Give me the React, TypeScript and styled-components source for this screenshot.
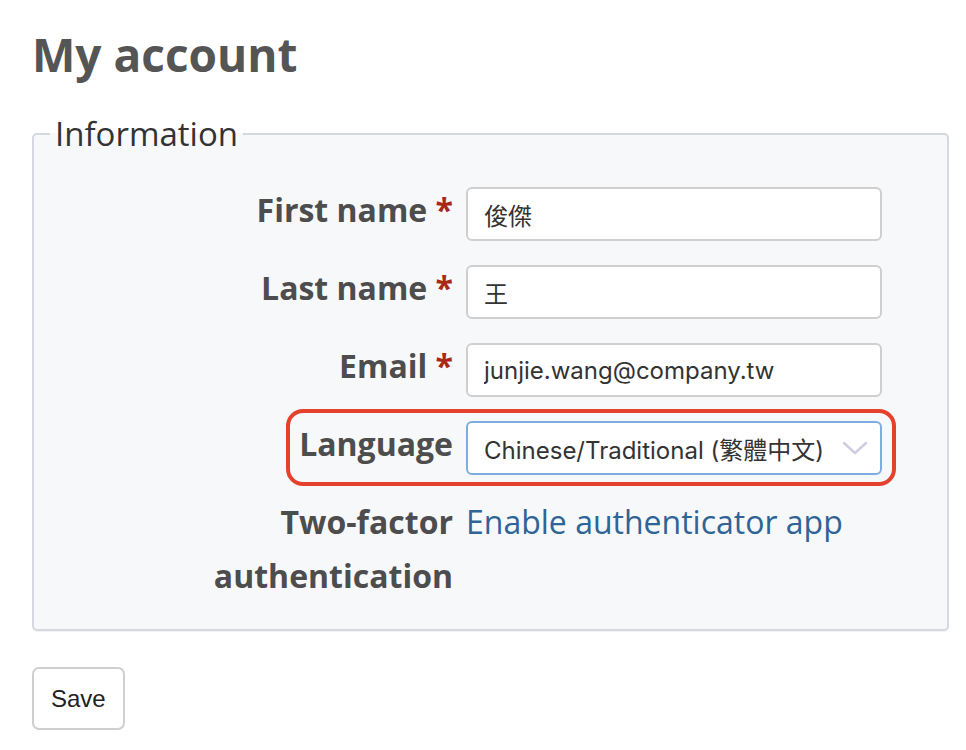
import React from 'react'
import styled, { createGlobalStyle } from 'styled-components'

const GlobalStyle = createGlobalStyle`
  html, body {
    margin: 0;
    padding: 0;
    background: #fff;
  }
  body {
    font-family: "Open Sans", "Noto Sans", "Noto Sans CJK TC", sans-serif;
    color: #333;
  }
`;

const Page = styled.main`
  padding: 0 18px 20px 32px;
`;

const Title = styled.h1`
  margin: 26px 0 25px;
  font-size: 46px;
  line-height: 56px;
  font-weight: 700;
  color: #555;
`;

const Fieldset = styled.fieldset`
  margin: 0;
  padding: 26px 65px 26px 16px;
  border: 2px solid #d5d8de;
  border-radius: 5px;
  background: #f7f8fa;
  box-shadow: 0 1px 1px rgba(0, 0, 0, 0.06);
  display: flex;
  flex-direction: column;
  gap: 24px;
`;

const Legend = styled.legend`
  padding: 0 5px;
  font-size: 33px;
  line-height: 54px;
  color: #333;
`;

const Row = styled.div<{ $highlight?: boolean }>`
  position: relative;
  display: flex;
  align-items: flex-start;
  gap: 13px;

  ${p => p.$highlight && `
    &::after {
      content: '';
      position: absolute;
      left: 236px;
      right: -14px;
      top: -12px;
      bottom: -11px;
      border: 4px solid #e5412d;
      border-radius: 17px;
      pointer-events: none;
    }
  `}
`;

const Label = styled.label`
  flex: 0 0 403px;
  margin-top: -4px;
  text-align: right;
  font-size: 32px;
  line-height: 54px;
  font-weight: 700;
  color: #4d4d4d;
`;

const Required = styled.span`
  color: #a8281a;
`;

const Input = styled.input`
  box-sizing: border-box;
  width: 416px;
  height: 54px;
  padding: 0 16px;
  border: 2px solid #cfcfcf;
  border-radius: 6px;
  background: #fff;
  font-family: "Inter", "Noto Sans CJK TC", sans-serif;
  font-size: 24px;
  color: #333;
  outline: none;
`;

const SelectBox = styled.div`
  box-sizing: border-box;
  width: 416px;
  height: 54px;
  padding: 0 12px 0 16px;
  border: 2px solid #7eaee0;
  border-radius: 6px;
  background: #fff;
  display: flex;
  align-items: center;
  justify-content: space-between;
  font-family: "Inter", "Noto Sans CJK TC", sans-serif;
  font-size: 24px;
  color: #333;
`;

const Chevron = styled.svg`
  width: 26px;
  height: 16px;
  flex: none;
`;

const Link = styled.a`
  margin-top: -4px;
  font-size: 32px;
  line-height: 54px;
  color: #2e6496;
  text-decoration: none;
`;

const SaveButton = styled.button`
  margin-top: 36px;
  height: 63px;
  padding: 0 17px;
  border: 2px solid #cfcfcf;
  border-radius: 7px;
  background: #fff;
  font-family: "Liberation Sans", Arial, sans-serif;
  font-size: 24px;
  color: #222;
`;

const App = () => {
  return (
    <Page>
      <GlobalStyle />
      <Title>My account</Title>
      <Fieldset>
        <Legend>Information</Legend>
        <Row>
          <Label>First name <Required>*</Required></Label>
          <Input defaultValue='俊傑' />
        </Row>
        <Row>
          <Label>Last name <Required>*</Required></Label>
          <Input defaultValue='王' />
        </Row>
        <Row>
          <Label>Email <Required>*</Required></Label>
          <Input defaultValue='junjie.wang@company.tw' />
        </Row>
        <Row $highlight>
          <Label>Language</Label>
          <SelectBox>
            <span>Chinese/Traditional (繁體中文)</span>
            <Chevron viewBox='0 0 26 16'>
              <polyline points='2,3 13,13 24,3' fill='none' stroke='#cfcde0' strokeWidth='2.5' strokeLinecap='round' strokeLinejoin='round' />
            </Chevron>
          </SelectBox>
        </Row>
        <Row>
          <Label>Two-factor authentication</Label>
          <Link href='#'>Enable authenticator app</Link>
        </Row>
      </Fieldset>
      <SaveButton>Save</SaveButton>
    </Page>
  )
}

export default App
